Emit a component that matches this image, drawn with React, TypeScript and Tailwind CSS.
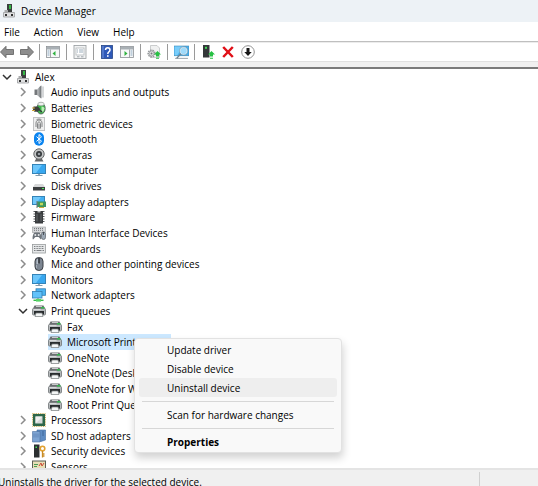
import type { ReactNode } from "react";

function Svg({ children, className = "h-[14px] w-[14px]" }: { children: ReactNode; className?: string }) {
  return (
    <svg viewBox="0 0 14 14" className={`${className} shrink-0`} aria-hidden="true">
      {children}
    </svg>
  );
}

/* ---------- tree icons ---------- */

const ComputerNode = () => (
  <Svg>
    <rect x="5" y="0" width="5" height="8" fill="#3c3f3f" />
    <rect x="7" y="1" width="2" height="4" fill="#35b845" />
    <path d="M2.500 6H6v2.500H2.500z" fill="#a9abac" />
    <path d="M1.500 8.500h11v4.500h-11z" fill="#dfe0e1" stroke="#9a9c9e" strokeWidth=".8" />
    <rect x="3" y="10" width="2" height="2" fill="#333" />
    <rect x="9" y="10" width="2" height="2" fill="#333" />
  </Svg>
);

const Speaker = () => (
  <Svg>
    <path d="M2.500 4.500H5V10H2.500z" fill="#75787b" />
    <path d="M5 4.500L9 .5v13L5 10z" fill="#a9acae" />
    <path d="M7.500 2L9.500.5v13l-2-1.500z" fill="#7b7f82" />
    <path d="M11 1.500v11" fill="none" stroke="#c4c7c9" strokeWidth="1.400" />
  </Svg>
);

const Battery = () => (
  <Svg>
    <ellipse cx="9" cy="7.500" rx="4.200" ry="5.500" fill="#3cb64a" stroke="#5f6664" strokeWidth=".9" />
    <ellipse cx="9" cy="3" rx="3.200" ry="1.800" fill="#eef1ef" stroke="#8d9391" strokeWidth=".6" />
    <path d="M9.500 5.500c2 0 3 1 3 2l-1 3-2 1z" fill="#b8efb4" />
    <path d="M1.500 5.500H6l2 2.300-2 3H2.500L1 9z" fill="#3d403c" />
    <path d="M0 7h3M0 9.500h3" stroke="#d0a43a" strokeWidth="1" />
    <path d="M7 8.500l3 2.500" stroke="#34373a" strokeWidth="1.400" />
  </Svg>
);

const Fingerprint = () => (
  <Svg>
    <rect x="1.500" y=".5" width="11" height="13" fill="#efefef" stroke="#c2c3c4" />
    <g fill="none" stroke="#77797b" strokeWidth=".9">
      <path d="M4 10V6c0-4 6-4 6 0v4" />
      <path d="M5.500 11.500V6.500c0-2 3-2 3 0v5" />
      <path d="M7 6.500v5.500M4.500 2.800c1.500-1 3.500-1 5 0" />
    </g>
  </Svg>
);

const Bluetooth = () => (
  <Svg>
    <rect x="2" y=".3" width="10" height="13.400" rx="5" fill="#0a84f0" />
    <path d="M4.500 4.600l5 4.600L7 11.500v-9l2.500 2.300-5 4.600" fill="none" stroke="#fff" strokeWidth="1" />
  </Svg>
);

const Camera = () => (
  <Svg>
    <path d="M4 11h6l1.500 2.500h-9z" fill="#66686a" />
    <circle cx="7" cy="6" r="5.200" fill="#c4c6c7" stroke="#66686a" strokeWidth="1" />
    <circle cx="7" cy="6" r="3" fill="#35393c" />
    <circle cx="7" cy="6" r="1.300" fill="#9ba1a6" />
  </Svg>
);

const Monitor = () => (
  <Svg>
    <rect x=".5" y="1.500" width="13" height="9" fill="#38a7ef" stroke="#3584b8" />
    <path d="M1 2h9L4 10H1z" fill="#6cc6fb" />
    <path d="M6 11h2v1.500H6z" fill="#9ab" />
    <path d="M3.500 12.500h7" stroke="#7f9cae" />
  </Svg>
);

const Disk = () => (
  <Svg>
    <path d="M3 5h8l2 3H1z" fill="#d7d8d9" />
    <rect x="1" y="8" width="12" height="3.500" fill="#3c3e40" />
    <rect x="10" y="9" width="2" height="1" fill="#4bea5a" />
  </Svg>
);

const DisplayAdapter = () => (
  <Svg>
    <rect x=".5" y="1.500" width="12" height="8" fill="#43b0f2" stroke="#3584b8" />
    <path d="M1 2h8L4 9H1z" fill="#72c9fb" />
    <rect x="5" y="6.500" width="9" height="5.500" fill="#3d9561" />
    <rect x="8" y="7.800" width="3" height="2.500" fill="#c3d85c" />
    <path d="M5 6v7" stroke="#727678" />
    <path d="M7 12.500h5" stroke="#d0aa3b" />
  </Svg>
);

const Firmware = () => (
  <Svg>
    <path d="M1.500 1.500h11M1.500 4h11M1.500 6.500h11M1.500 9h11M1.500 11.500h11" stroke="#55585a" />
    <rect x="3" y="1" width="8" height="12.500" fill="#393c3e" />
    <path d="M5.500 1h3v1.500h-3z" fill="#b9bbbc" />
    <path d="M5 4v7.500M9 4v7.500" stroke="#626668" />
  </Svg>
);

const Hid = () => (
  <Svg>
    <rect x=".5" y="1" width="13" height="5.500" fill="#d5d7d9" stroke="#989b9d" strokeWidth=".6" />
    <path d="M2 2.500h10M2 4.300h10" stroke="#777a7d" strokeDasharray="1 1" />
    <path d="M1 13.500c-1-1 0-7 2-7h4c2 0 3 6 2 7-1 0-1.500-2.500-2.500-2.500h-3C2.500 11 2 13.500 1 13.500z" fill="#6c737a" />
    <circle cx="3.300" cy="9" r="1" fill="#e5e7e9" />
    <circle cx="6.700" cy="9" r="1" fill="#e5e7e9" />
    <rect x="9.500" y="6" width="4" height="7.500" rx="2" fill="#9ba7b3" stroke="#596069" strokeWidth=".7" />
    <path d="M11.500 6v3" stroke="#373d43" strokeWidth=".8" />
  </Svg>
);

const Keyboard = () => (
  <Svg>
    <rect x=".5" y="2.500" width="13" height="8.500" fill="#e6e8e9" stroke="#9a9d9f" strokeWidth=".8" />
    <path d="M2 4.500h10M2 6.500h10" stroke="#7c7f82" strokeDasharray="1 .6" />
    <path d="M2 8.500h1.500M4.500 8.500h5M10.500 8.500h1.500" stroke="#7c7f82" />
  </Svg>
);

const Mouse = () => (
  <Svg>
    <rect x="3" y=".5" width="8" height="13" rx="3.800" fill="#7c8591" stroke="#3a3e44" />
    <path d="M4.500 7V4c0-1.500 1-2.500 2-2.500V7z" fill="#b4bdc8" />
    <path d="M7 1v5.500" stroke="#24272b" strokeWidth="1.400" />
    <path d="M4.500 8v3" stroke="#a2abb5" />
  </Svg>
);

const Network = () => (
  <Svg>
    <rect x="4" y=".8" width="9.500" height="6.500" fill="#4bb4f2" stroke="#337fb2" strokeWidth=".8" />
    <rect x=".5" y="3.500" width="9.500" height="6.500" fill="#61c2fa" stroke="#337fb2" strokeWidth=".8" />
    <path d="M6 10v2" stroke="#5d9b6a" />
    <path d="M1.500 12.300h10" stroke="#36bb4a" strokeWidth="1.400" />
    <rect x="4" y="11" width="5" height="2.600" fill="#57d467" />
  </Svg>
);

const Printer = () => (
  <Svg>
    <path d="M2.500 1.500h9l1.500 3H1z" fill="#6b6f71" />
    <path d="M4 2.500h6" stroke="#dfe2e2" strokeWidth=".8" />
    <rect x=".5" y="4.500" width="13" height="6.500" rx="1" fill="#b4b8ba" stroke="#707476" strokeWidth=".8" />
    <path d="M2 7h10v3.500H2z" fill="#282c2e" />
    <path d="M4 9h6l1 3.500H3z" fill="#f3f5f5" stroke="#777b7d" strokeWidth=".7" />
    <path d="M9 3.800h3.500" stroke="#2fc04b" strokeWidth="1.400" />
    <path d="M1.500 5.700h7" stroke="#eceeee" strokeWidth=".8" />
  </Svg>
);

const Processor = () => (
  <Svg>
    <rect x=".6" y=".6" width="12.800" height="12.800" fill="none" stroke="#c6a64d" strokeDasharray="1 .8" />
    <rect x="1" y="1" width="12" height="12" fill="#2d6649" />
    <rect x="3.500" y="3.500" width="7" height="7" fill="#d6d8d8" />
    <path d="M3.500 3.500h7l-7 7z" fill="#efefef" />
  </Svg>
);

const SdHost = () => (
  <Svg>
    <path d="M5 1h8.500v10L9 12.500H5z" fill="#5e8cc4" stroke="#426c9f" strokeWidth=".6" />
    <path d="M.5 2.500H8V13H.5z" fill="#7da4d3" stroke="#4c719f" strokeWidth=".6" />
    <path d="M2 4.500v4M4 4.500v4M6 4.500v4" stroke="#5a82b4" strokeWidth=".8" />
    <path d="M11 2v5" stroke="#3c6698" />
  </Svg>
);

const Security = () => (
  <Svg>
    <rect x="2" y=".5" width="5.500" height="13" fill="#2c2f31" />
    <rect x="3.500" y="2.500" width="1.500" height="1.500" fill="#43e258" />
    <circle cx="10.500" cy="4.500" r="2.300" fill="none" stroke="#e1a131" strokeWidth="1.600" />
    <path d="M10.500 7v6.500M10.500 10h2M10.500 12h2" stroke="#c88b25" strokeWidth="1.300" />
  </Svg>
);

const Sensor = () => (
  <Svg>
    <rect x=".5" y="1" width="13" height="12" fill="#e7dfb6" stroke="#5b5e55" />
    <path d="M2 4.500h4M2 6.500h3" stroke="#4a9b54" />
    <path d="M7 6l2-3 1 3 2-3" fill="none" stroke="#cc4b35" />
    <path d="M2 9.500h10" stroke="#c89038" />
  </Svg>
);

/* ---------- toolbar icons ---------- */

const Arrow = ({ flip = false }: { flip?: boolean }) => (
  <Svg>
    <path
      d={flip ? "M13.500 7L8 1.300V4.500H.5v5H8v3.200z" : "M.5 7L6 1.300V4.500h7.500v5H6v3.200z"}
      fill="#8e8e8e"
      stroke="#6a6a6a"
      strokeWidth=".9"
    />
  </Svg>
);

const Panel = ({ right = false }: { right?: boolean }) => (
  <Svg>
    <rect x=".5" y="1.500" width="13" height="11" fill="#f7f8f8" stroke="#8b9094" strokeWidth=".8" />
    <rect x="1" y="2" width="12" height="2.500" fill="#a9b0b5" />
    <path d={right ? "M9.500 4.500v8" : "M4.500 4.500v8"} stroke="#8b9094" strokeWidth=".8" />
    <path
      d={right ? "M10.500 6h2M10.500 8h2M10.500 10h2" : "M1.500 6h2M1.500 8h2M1.500 10h2"}
      stroke="#6e93b3"
      strokeWidth=".8"
    />
    <path d={right ? "M4.500 6v5l3-2.500z" : "M9.500 6v5l-3-2.500z"} fill="#2fb13f" />
  </Svg>
);

const PropertiesSheet = () => (
  <Svg>
    <rect x="1" y=".5" width="12" height="13" fill="#f2f3f4" stroke="#969b9f" strokeWidth=".8" />
    <rect x="3" y="3" width="8" height="7" fill="#fff" stroke="#b2b7bb" strokeWidth=".8" />
    <path d="M4 5h1M6 5h4M4 7h1M6 7h4" stroke="#8499ab" strokeWidth=".8" />
    <path d="M4 11.800h2.500M8 11.800h2.500" stroke="#9da4a9" />
  </Svg>
);

const HelpBook = () => (
  <Svg>
    <rect x="1.500" y=".5" width="11" height="13" fill="#2f59b8" stroke="#274687" strokeWidth=".8" />
    <path d="M3 1v12" stroke="#7597dd" />
    <path d="M5.500 5c0-3 4.500-3 4.500 0C10 6.800 7.800 6.800 7.800 9" fill="none" stroke="#fff" strokeWidth="1.500" />
    <rect x="7" y="10.200" width="1.600" height="1.600" fill="#fff" />
  </Svg>
);

const GreenUp = () => <path d="M10.500 6l3.500 3.500h-2V11H9V9.500H7zM9 11.500h3v.8H9zM9 13h3v.8H9z" fill="#27c043" />;

const DriverUpdate = () => (
  <Svg>
    <path d="M3.500.5H10l2.500 2.500v9.500h-9z" fill="#f0f1f1" stroke="#b7babb" strokeWidth=".7" />
    <circle cx="4.500" cy="8.500" r="3.300" fill="none" stroke="#94989a" strokeWidth="1.600" strokeDasharray="1.500 .8" />
    <circle cx="4.500" cy="8.500" r="2.500" fill="#e1e2e2" stroke="#989b9d" strokeWidth=".8" />
    <circle cx="4.500" cy="8.500" r="1" fill="#777a7c" />
    <GreenUp />
  </Svg>
);

const Scan = () => (
  <Svg className="h-[15px] w-[15px]">
    <rect x="0" y="1" width="14" height="9" fill="#45b1f1" stroke="#418db9" strokeWidth=".7" />
    <path d="M.5 1.500h8L3 9.500H.500z" fill="#79cdfa" />
    <path d="M1 12.500h12" stroke="#a0a9af" />
    <circle cx="9" cy="5.500" r="3.400" fill="#9fdafa" stroke="#e0eef5" strokeWidth="1" />
    <circle cx="9" cy="5.500" r="3.800" fill="none" stroke="#6b8ba0" strokeWidth=".5" />
    <path d="M6.300 8.200L2.500 12.500" stroke="#6f8492" strokeWidth="1.300" />
  </Svg>
);

const Enable = () => (
  <Svg>
    <rect x="2" y="0" width="6.500" height="12.500" fill="#343739" />
    <rect x="4" y="1.800" width="2" height="2" fill="#43db59" />
    <path d="M2 12.500h6" stroke="#999" />
    <GreenUp />
  </Svg>
);

const RedCross = () => (
  <Svg>
    <path d="M2.200 2l9.600 10M11.800 2L2.200 12" stroke="#e01018" strokeWidth="2.500" />
  </Svg>
);

const DownCircle = () => (
  <Svg>
    <circle cx="7" cy="7" r="6.300" fill="#fff" stroke="#929292" strokeWidth="1" />
    <path d="M5.500 3h3v4h2.200L7 11 3.300 7h2.200z" fill="#171717" />
  </Svg>
);

/* ---------- tree ---------- */

type Node = { label: string; icon: () => ReactNode; level: 0 | 1 | 2; open?: boolean; selected?: boolean };

const nodes: Node[] = [
  { label: "Alex", icon: ComputerNode, level: 0, open: true },
  { label: "Audio inputs and outputs", icon: Speaker, level: 1 },
  { label: "Batteries", icon: Battery, level: 1 },
  { label: "Biometric devices", icon: Fingerprint, level: 1 },
  { label: "Bluetooth", icon: Bluetooth, level: 1 },
  { label: "Cameras", icon: Camera, level: 1 },
  { label: "Computer", icon: Monitor, level: 1 },
  { label: "Disk drives", icon: Disk, level: 1 },
  { label: "Display adapters", icon: DisplayAdapter, level: 1 },
  { label: "Firmware", icon: Firmware, level: 1 },
  { label: "Human Interface Devices", icon: Hid, level: 1 },
  { label: "Keyboards", icon: Keyboard, level: 1 },
  { label: "Mice and other pointing devices", icon: Mouse, level: 1 },
  { label: "Monitors", icon: Monitor, level: 1 },
  { label: "Network adapters", icon: Network, level: 1 },
  { label: "Print queues", icon: Printer, level: 1, open: true },
  { label: "Fax", icon: Printer, level: 2 },
  { label: "Microsoft Print to PDF", icon: Printer, level: 2, selected: true },
  { label: "OneNote", icon: Printer, level: 2 },
  { label: "OneNote (Desktop)", icon: Printer, level: 2 },
  { label: "OneNote for Windows", icon: Printer, level: 2 },
  { label: "Root Print Queue", icon: Printer, level: 2 },
  { label: "Processors", icon: Processor, level: 1 },
  { label: "SD host adapters", icon: SdHost, level: 1 },
  { label: "Security devices", icon: Security, level: 1 },
  { label: "Sensors", icon: Sensor, level: 1 },
];

const indent = ["pl-0", "pl-4", "pl-8"];

function TreeRow({ node }: { node: Node }) {
  const Icon = node.icon;
  return (
    <li
      role="treeitem"
      aria-level={node.level + 1}
      aria-expanded={node.level < 2 ? !!node.open : undefined}
      aria-selected={!!node.selected}
      className={`flex min-h-0 flex-1 items-center ${indent[node.level]}`}
    >
      {node.level < 2 ? (
        <button type="button" aria-label={`Toggle ${node.label}`} className="flex w-4 shrink-0 items-center pl-0.5">
          <svg viewBox="0 0 10 10" className="h-[10px] w-[10px]" fill="none" strokeWidth="1.500" aria-hidden="true">
            {node.open ? <path d="M1 3l4 4 4-4" stroke="#303030" /> : <path d="M3 1l4 4-4 4" stroke="#8c8c8c" />}
          </svg>
        </button>
      ) : (
        <span className="w-4 shrink-0" />
      )}
      <span className={`flex h-full items-center gap-[5px] pr-0.5 whitespace-nowrap ${node.selected ? "bg-[#cce8ff]" : ""}`}>
        <Icon />
        {node.label}
      </span>
    </li>
  );
}

const Divider = () => <span className="h-4 w-px shrink-0 bg-[#9a9a9a]" />;

function Tool({ label, children }: { label: string; children: ReactNode }) {
  return (
    <button type="button" aria-label={label} className="flex w-5 shrink-0 items-center justify-center">
      {children}
    </button>
  );
}

function MenuItem({ children, active = false, bold = false }: { children: ReactNode; active?: boolean; bold?: boolean }) {
  return (
    <button
      type="button"
      role="menuitem"
      className={`block h-[19px] w-full rounded-[3px] pl-7 text-left whitespace-nowrap ${active ? "bg-[#eeeeee]" : ""} ${bold ? "font-bold" : ""}`}
    >
      {children}
    </button>
  );
}

const Separator = () => <div role="separator" className="mx-[3px] mt-1 mb-[3px] h-px bg-[#d7d7d7]" />;

export default function App() {
  return (
    <div className="relative flex h-screen flex-col overflow-hidden bg-white font-['Open_Sans','Noto_Sans',sans-serif] text-[10px] leading-4 text-black">
      <header className="flex h-[22px] shrink-0 items-center gap-[5px] bg-[#edf2f6] pl-0.5">
        <ComputerNode />
        <h1>Device Manager</h1>
      </header>

      <nav className="flex h-[19px] shrink-0 items-center gap-[14px] pl-1">
        {["File", "Action", "View", "Help"].map((m) => (
          <button key={m} type="button">
            {m}
          </button>
        ))}
      </nav>

      <div
        role="toolbar"
        aria-label="Actions"
        className="flex h-5 shrink-0 items-center gap-[3px] border-t border-[#bfbfbf] pt-px shadow-[inset_0_1px_0_#ececec]"
      >
        <div className="flex w-9 shrink-0 items-center justify-between pr-0.5">
          <button type="button" aria-label="Back"><Arrow /></button>
          <button type="button" aria-label="Forward"><Arrow flip /></button>
        </div>
        <Divider />
        <Tool label="Show or hide console tree"><Panel /></Tool>
        <Divider />
        <Tool label="Properties"><PropertiesSheet /></Tool>
        <Divider />
        <div className="flex">
          <Tool label="Help"><HelpBook /></Tool>
          <Tool label="Show or hide action pane"><Panel right /></Tool>
        </div>
        <Divider />
        <Tool label="Update device driver"><DriverUpdate /></Tool>
        <Divider />
        <Tool label="Scan for hardware changes"><Scan /></Tool>
        <Divider />
        <div className="flex">
          <Tool label="Enable device"><Enable /></Tool>
          <Tool label="Uninstall device"><RedCross /></Tool>
          <Tool label="Disable device"><DownCircle /></Tool>
        </div>
      </div>
      <div className="h-[6px] shrink-0 border-t border-[#e0e0e0] bg-[#f0f0f0]" />

      <main className="min-h-0 flex-1 overflow-hidden border-t-2 border-[#7a7a7a]">
        <ul role="tree" aria-label="Devices" className="flex h-[406px] flex-col">
          {nodes.map((n) => (
            <TreeRow key={n.label} node={n} />
          ))}
        </ul>
      </main>

      <footer className="flex h-[18px] shrink-0 border-t-2 border-[#e4e4e4] bg-[#f0f0f0]">
        <p className="-ml-0.5 flex-1 pt-1 whitespace-nowrap">Uninstalls the driver for the selected device.</p>
        <div className="mt-0.5 w-[59px] border-l border-[#d0d0d0]" />
      </footer>

      <div
        role="menu"
        aria-label="Device actions"
        className="absolute top-[338px] left-[134px] w-[208px] rounded-[4px] border border-[#e2e2e2] bg-[#f9f9f9] px-1 py-px shadow-[1px_5px_9px_rgba(0,0,0,0.18)]"
      >
        <MenuItem>Update driver</MenuItem>
        <MenuItem>Disable device</MenuItem>
        <MenuItem active>Uninstall device</MenuItem>
        <Separator />
        <MenuItem>Scan for hardware changes</MenuItem>
        <Separator />
        <MenuItem bold>Properties</MenuItem>
      </div>
    </div>
  );
}
